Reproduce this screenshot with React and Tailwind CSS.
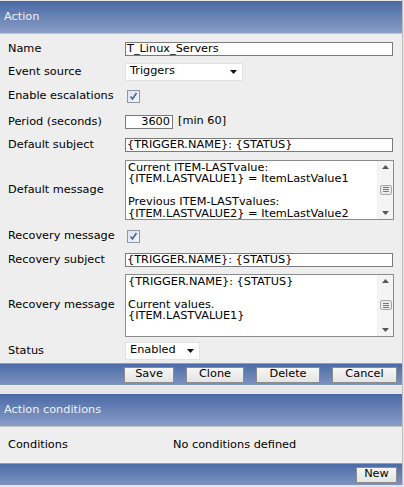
import React from "react";

const F = { fontFamily: '"DejaVu Sans", Verdana, sans-serif' };

function Header({ title }) {
  return (
    <div className="h-[33px] flex items-center pl-[4px] pt-[1px] text-[11.3px] text-[#eef1f7] bg-gradient-to-b from-[#4a69a4] to-[#8a9ec6] border-b border-[#c4c4c4]">
      {title}
    </div>
  );
}

function Bar({ children }) {
  return (
    <div className="h-[22px] flex items-center justify-end border-t border-[#9c9c9c] bg-gradient-to-b from-[#4b6ba7] to-[#7d93bf]">
      {children}
    </div>
  );
}

function Btn({ w, children }) {
  return (
    <div
      className={`h-[16px] flex items-center justify-center text-[11.3px] text-[#000] bg-gradient-to-b from-[#f6f6f6] to-[#e4e4e4] border border-[#8c8c8c] ${w}`}
    >
      {children}
    </div>
  );
}

function Row({ h, label, children }) {
  return (
    <div className={`flex items-center ${h}`}>
      <div className="w-[125px] shrink-0 pl-[8px] pt-[1px] text-[11.3px] text-[#000]">{label}</div>
      <div className="flex items-center">{children}</div>
    </div>
  );
}

function Input({ w, value, right }) {
  return (
    <div
      className={`h-[14px] bg-white border border-[#7a7a7a] text-[11.3px] leading-[12px] text-[#000] px-[1px] whitespace-nowrap overflow-hidden ${w} ${right ? "text-right pr-[2px]" : ""}`}
    >
      {value}
    </div>
  );
}

function Select({ w, value }) {
  return (
    <div className={`h-[18px] bg-white border border-[#e2e2e2] flex items-center justify-between pl-[4px] pr-[4px] text-[11.3px] text-[#000] ${w}`}>
      <span>{value}</span>
      <svg width="8" height="4" viewBox="0 0 8 4"><path d="M0 0h7L3.5 4z" fill="#111" /></svg>
    </div>
  );
}

function Check() {
  return (
    <div className="ml-[2px] w-[13px] h-[13px] border border-[#8d97ab] bg-gradient-to-br from-[#dde2ec] to-[#f3f4f7] flex items-center justify-center">
      <svg width="9" height="9" viewBox="0 0 9 9">
        <path d="M1.5 4.5L3.5 7L7.5 1" stroke="#4b5f9e" strokeWidth="1.6" fill="none" />
      </svg>
    </div>
  );
}

function Scroll() {
  return (
    <div className="w-[16px] self-stretch bg-[#f4f4f4] border-l border-[#f0f0f0] flex flex-col items-center justify-between py-[4px]">
      <svg width="7" height="4" viewBox="0 0 7 4"><path d="M0 4h7L3.5 0z" fill="#555" /></svg>
      <div className="w-[12px] h-[10px] border border-[#a8a8a8] bg-[#ececec] rounded-[2px] flex flex-col items-center justify-center gap-[1px]">
        <div className="w-[6px] h-px bg-[#777]" />
        <div className="w-[6px] h-px bg-[#777]" />
        <div className="w-[6px] h-px bg-[#777]" />
      </div>
      <svg width="7" height="4" viewBox="0 0 7 4"><path d="M0 0h7L3.5 4z" fill="#555" /></svg>
    </div>
  );
}

function TextArea({ h, lines }) {
  return (
    <div className={`w-[269px] ${h} bg-white border border-[#8c8c8c] flex`}>
      <div className="flex-1 overflow-hidden pl-[2px] pt-[1px] text-[11.3px] leading-[11.5px] text-[#000] whitespace-pre">
        {lines.join("\n")}
      </div>
      <Scroll />
    </div>
  );
}

export default function App() {
  return (
    <div style={F} className="w-[404px] h-[487px] bg-[#e6e6e6] overflow-hidden">
      <div className="w-[403px] border-r border-[#bdbdbd]">
        <div className="h-px bg-[#e6e6e6]" />
        <Header title="Action" />
        <div className="bg-[#eeeeee] pt-[3px] pb-[2px]">
          <Row h="h-[23px]" label="Name">
            <Input w="w-[268px]" value="T_Linux_Servers" />
          </Row>
          <Row h="h-[23px]" label="Event source">
            <Select w="w-[118px]" value="Triggers" />
          </Row>
          <Row h="h-[26px]" label="Enable escalations">
            <Check />
          </Row>
          <Row h="h-[25px]" label="Period (seconds)">
            <Input w="w-[48px]" value="3600" right />
            <span className="ml-[5px] text-[11.3px] text-[#000]">[min 60]</span>
          </Row>
          <Row h="h-[22px]" label="Default subject">
            <Input w="w-[268px]" value="{TRIGGER.NAME}: {STATUS}" />
          </Row>
          <Row h="h-[67px]" label="Default message">
            <TextArea
              h="h-[60px]"
              lines={[
                "Current ITEM-LASTvalue:",
                "{ITEM.LASTVALUE1} = ItemLastValue1",
                "",
                "Previous ITEM-LASTvalues:",
                "{ITEM.LASTVALUE2} = ItemLastValue2",
              ]}
            />
          </Row>
          <Row h="h-[26px]" label="Recovery message">
            <Check />
          </Row>
          <Row h="h-[21px]" label="Recovery subject">
            <Input w="w-[268px]" value="{TRIGGER.NAME}: {STATUS}" />
          </Row>
          <Row h="h-[70px]" label="Recovery message">
            <TextArea
              h="h-[63px]"
              lines={["{TRIGGER.NAME}: {STATUS}", "", "Current values.", "{ITEM.LASTVALUE1}"]}
            />
          </Row>
          <Row h="h-[21px]" label="Status">
            <Select w="w-[75px]" value="Enabled" />
          </Row>
        </div>
        <Bar>
          <div className="flex gap-[12px] pr-[5px]">
            <Btn w="w-[50px]">Save</Btn>
            <Btn w="w-[58px]">Clone</Btn>
            <Btn w="w-[64px]">Delete</Btn>
            <Btn w="w-[65px]">Cancel</Btn>
          </div>
        </Bar>
        <div className="h-[9px] bg-[#e6e6e6] border-t border-[#f2f2f2]" />
        <Header title="Action conditions" />
        <div className="h-[36px] bg-[#eeeeee] flex items-center text-[11.3px] text-[#000]">
          <div className="w-[173px] pl-[8px]">Conditions</div>
          <div>No conditions defined</div>
        </div>
        <Bar>
          <div className="pr-[5px]">
            <Btn w="w-[41px]">New</Btn>
          </div>
        </Bar>
      </div>
    </div>
  );
}
